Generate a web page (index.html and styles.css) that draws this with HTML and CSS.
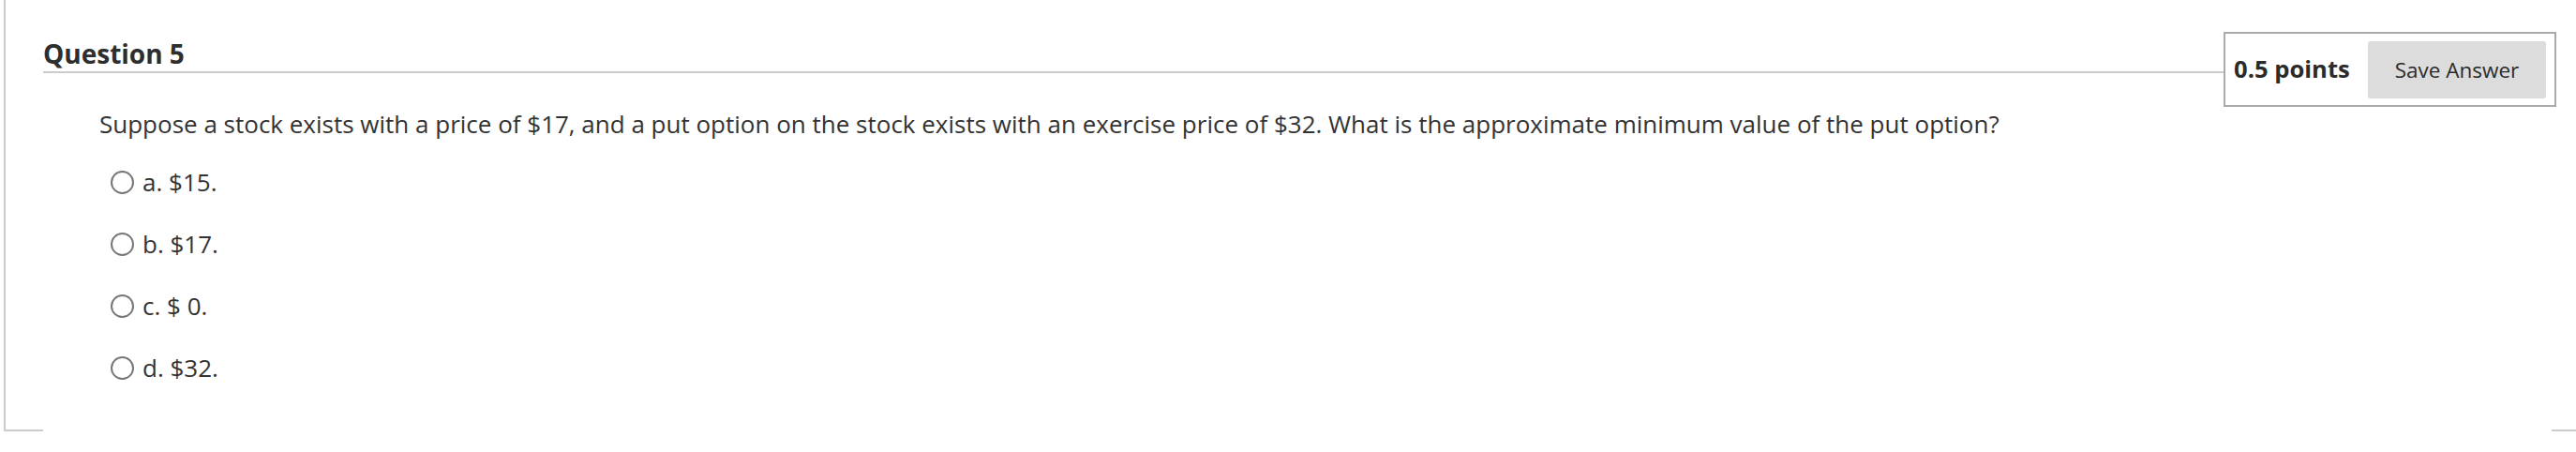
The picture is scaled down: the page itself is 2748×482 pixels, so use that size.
FILE: index.html
```html
<!DOCTYPE html>
<html lang="en">
<head>
<meta charset="utf-8">
<title>Question 5</title>
<link rel="stylesheet" href="styles.css">
</head>
<body>
<div class="page">
  <div class="frame">
    <div class="header">
      <h2 class="title">Question 5</h2>
      <div class="points-box">
        <span class="points">0.5 points</span>
        <button class="save-btn" type="button">Save Answer</button>
      </div>
    </div>
    <div class="question">
      <p class="prompt">Suppose a stock exists with a price of $17, and a put option on the stock exists with an exercise price of $32. What is the approximate minimum value of the put option?</p>
      <ul class="options">
        <li class="option"><span class="radio"></span><span class="label">a. $15.</span></li>
        <li class="option"><span class="radio"></span><span class="label">b. $17.</span></li>
        <li class="option"><span class="radio"></span><span class="label">c. $ 0.</span></li>
        <li class="option"><span class="radio"></span><span class="label">d. $32.</span></li>
      </ul>
    </div>
  </div>
  <div class="footer">
    <span class="seg seg-left"></span>
    <span class="seg seg-right"></span>
  </div>
</div>
</body>
</html>
```
FILE: styles.css
```css
* { box-sizing: border-box; }
html, body {
  margin: 0;
  padding: 0;
  background: #ffffff;
}
body {
  font-family: "Open Sans", "Liberation Sans", sans-serif;
  color: #333333;
  width: 2748px;
  height: 482px;
  overflow: hidden;
}
.page {
  display: flex;
  flex-direction: column;
  height: 460px;
}
.frame {
  flex: 1;
  margin-left: 4px;
  border-left: 2px solid #cccccc;
  display: flex;
  flex-direction: column;
}
.header {
  display: flex;
  align-items: flex-start;
  margin-top: 34px;
  padding-left: 40px;
  padding-right: 21px;
  height: 80px;
}
.title {
  flex: 1;
  margin: 0;
  padding-top: 4px;
  height: 44px;
  font-size: 28px;
  line-height: 38px;
  font-weight: 700;
  color: #2e2e2e;
  border-bottom: 2px solid #cccccc;
}
.points-box {
  width: 355px;
  height: 80px;
  border: 2px solid #aaaaaa;
  display: flex;
  align-items: center;
  justify-content: space-between;
  padding: 0 9px 0 9px;
}
.points {
  font-size: 25.6px;
  font-weight: 700;
  color: #2b2b2b;
  line-height: 34px;
}
.save-btn {
  width: 190px;
  height: 61px;
  margin-top: 1px;
  border: none;
  border-radius: 3px;
  background: #dcdcdc;
  font-family: "Open Sans", "Liberation Sans", sans-serif;
  font-size: 22.5px;
  color: #2b2b2b;
  padding: 0;
}
.question {
  padding-left: 100px;
  margin-top: 1px;
}
.prompt {
  margin: 0;
  font-size: 26px;
  line-height: 34px;
}
.options {
  list-style: none;
  margin: 12px 0 0 0;
  padding: 0 0 0 12px;
}
.option {
  display: flex;
  align-items: center;
  height: 66px;
  font-size: 26px;
}
.radio {
  width: 25px;
  height: 25px;
  border: 2px solid #777777;
  border-radius: 50%;
  flex: none;
}
.label {
  margin-left: 9px;
  line-height: 34px;
}
.footer {
  display: flex;
  justify-content: space-between;
  height: 2px;
}
.seg {
  display: block;
  height: 2px;
  background: #cccccc;
}
.seg-left {
  width: 42px;
  margin-left: 4px;
}
.seg-right {
  width: 26px;
}
```
